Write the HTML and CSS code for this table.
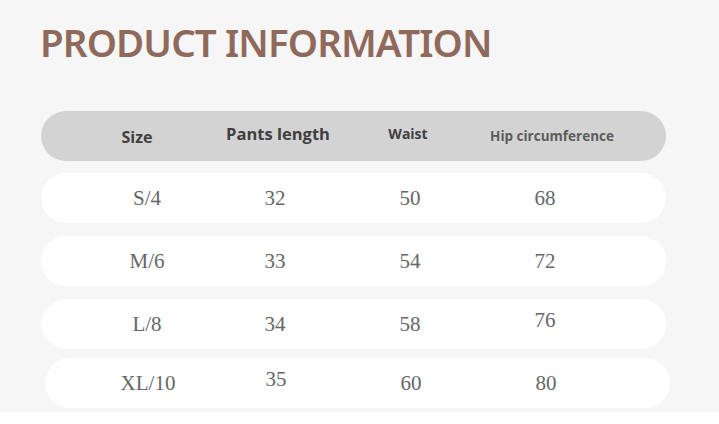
FILE: index.html
```html
<!DOCTYPE html>
<html>
<head>
<meta charset="utf-8">
<link rel="stylesheet" href="styles.css">
</head>
<body>
<main class="sheet">
  <h1 class="title">PRODUCT INFORMATION</h1>
  <div class="table">
    <div class="row head">
      <div class="h h-size">Size</div>
      <div class="h h-len">Pants length</div>
      <div class="h h-waist">Waist</div>
      <div class="h h-hip">Hip circumference</div>
    </div>
    <div class="row body r1">
      <div class="c">S/4</div><div class="c">32</div><div class="c">50</div><div class="c">68</div>
    </div>
    <div class="row body r2">
      <div class="c">M/6</div><div class="c">33</div><div class="c">54</div><div class="c">72</div>
    </div>
    <div class="row body r3">
      <div class="c">L/8</div><div class="c">34</div><div class="c">58</div><div class="c up">76</div>
    </div>
    <div class="row body r4">
      <div class="c">XL/10</div><div class="c up">35</div><div class="c">60</div><div class="c">80</div>
    </div>
  </div>
</main>
</body>
</html>
```
FILE: styles.css
```css
html, body {
  margin: 0;
  padding: 0;
  background: #ffffff;
}
.sheet {
  width: 719px;
  height: 412px;
  background: #f6f6f6;
  box-sizing: border-box;
  padding-top: 19px;
}
.title {
  margin: 0 0 0 40px;
  font-family: "Noto Sans", sans-serif;
  font-weight: 600;
  font-size: 38.5px;
  line-height: 46px;
  color: #8f6a5c;
  letter-spacing: -0.9px;
}
.table {
  margin-top: 46px;
  display: flex;
  flex-direction: column;
}
.row {
  width: 625px;
  height: 50px;
  margin-left: 41px;
  border-radius: 25px;
  display: grid;
  align-items: center;
  box-sizing: border-box;
}
.head {
  background: #d3d3d3;
  padding-left: 30px;
  grid-template-columns: 132px 150px 110px 178px;
}
.body {
  background: #ffffff;
  padding-left: 40px;
  grid-template-columns: 132px 124px 146px 124px;
}
.r1 { margin-top: 12px; }
.r2 { margin-top: 13px; }
.r3 { margin-top: 13px; }
.r4 { margin-top: 9px; margin-left: 45px; padding-left: 37px; }
.h {
  text-align: center;
  font-family: "Open Sans", sans-serif;
  font-weight: 700;
  color: #3f3f3f;
}
.h-size { font-size: 16px; padding-top: 2px; }
.h-len { font-size: 16.5px; padding-bottom: 6px; }
.h-waist { font-size: 14px; padding-bottom: 5px; }
.h-hip { font-size: 13.5px; color: #5c5c5c; }
.c {
  text-align: center;
  font-family: "Liberation Serif", serif;
  font-size: 21px;
  color: #666666;
}
.up { padding-bottom: 8px; }
```
